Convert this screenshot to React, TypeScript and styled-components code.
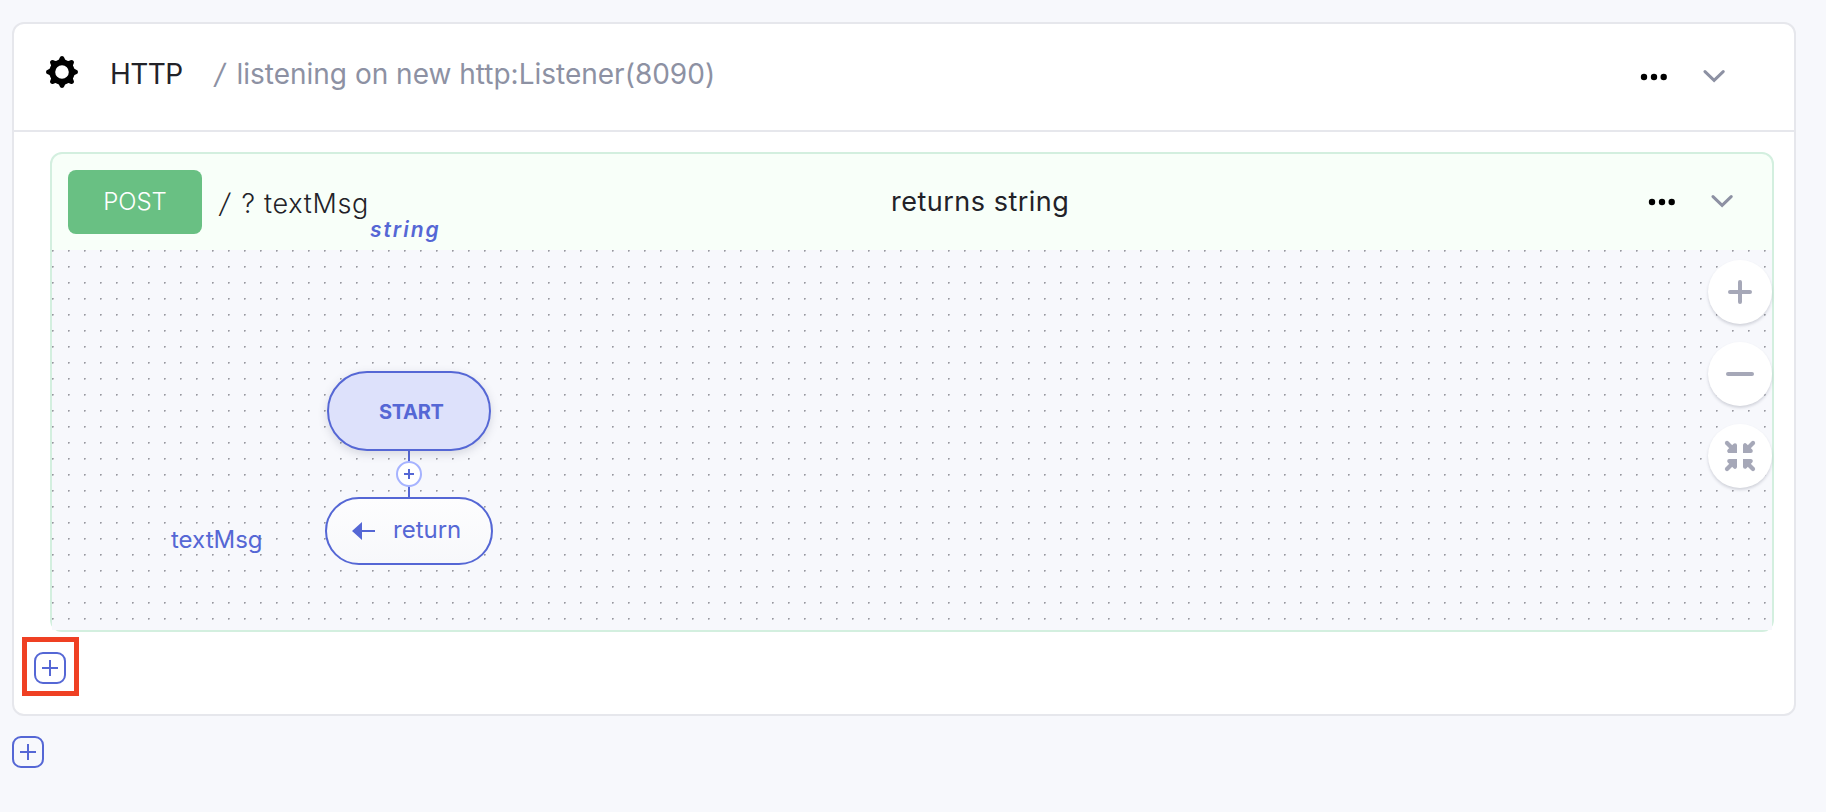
import React from "react";
import styled, { createGlobalStyle } from "styled-components";

const GlobalStyle = createGlobalStyle`
  * { box-sizing: border-box; }
  html, body { margin: 0; height: 100%; background: #f7f8fc; }
  body { font-family: Inter, "Open Sans", sans-serif; overflow: hidden; }
  svg { display: block; }
`;

const Page = styled.main`
  min-height: 812px;
  padding: 22px 30px 0 12px;
  display: flex;
  flex-direction: column;
  align-items: flex-start;
  gap: 20px;
`;

const ServiceCard = styled.section`
  width: 100%;
  height: 694px;
  background: #fff;
  border: 2px solid #e6e7ec;
  border-radius: 12px;
`;

const ServiceHeader = styled.header`
  height: 108px;
  padding: 0 68px 0 32px;
  border-bottom: 2px solid #e6e7ec;
  display: flex;
  align-items: flex-start;
`;

const GearSlot = styled.div`
  width: 32px;
  margin-top: 32px;
`;

const Label = styled.span<{
  $size: number;
  $line: number;
  $weight?: number;
  $color?: string;
  $spacing?: number;
  $top?: number;
  $left?: number;
}>`
  display: block;
  white-space: nowrap;
  font-size: ${(p) => p.$size}px;
  line-height: ${(p) => p.$line}px;
  font-weight: ${(p) => p.$weight ?? 400};
  color: ${(p) => p.$color ?? "#222228"};
  letter-spacing: ${(p) => p.$spacing ?? 0}px;
  margin-top: ${(p) => p.$top ?? 0}px;
  margin-left: ${(p) => p.$left ?? 0}px;
`;

const TypeLabel = styled(Label)`
  font-style: italic;
`;

const Slash = styled.span`
  display: inline-block;
  margin: 0 3px 0 2px;
  transform: skewX(-10deg);
`;

const Actions = styled.div<{ $top: number }>`
  margin-left: auto;
  margin-top: ${(p) => p.$top}px;
  display: flex;
  align-items: center;
  gap: 34px;
`;

const ResourceCard = styled.article`
  margin: 20px 20px 0 36px;
  height: 480px;
  border: 2px solid #d3efdf;
  border-radius: 12px;
  background: #f8fff9;
`;

const ResourceHeader = styled.header`
  height: 96px;
  padding: 0 38px 0 16px;
  display: grid;
  grid-template-columns: 823px 1fr auto;
`;

const Signature = styled.div`
  display: flex;
`;

const MethodBadge = styled.div`
  width: 134px;
  height: 64px;
  margin-top: 16px;
  border-radius: 8px;
  background: #69c083;
  display: flex;
  justify-content: center;
`;

const Canvas = styled.div`
  position: relative;
  height: 380px;
  background: #f7f8fc;
`;

const DotGrid = styled.svg`
  width: 100%;
  height: 100%;
`;

const Node = styled.div<{ $x: number; $y: number; $w: number; $h: number; $start?: boolean }>`
  position: absolute;
  left: ${(p) => p.$x}px;
  top: ${(p) => p.$y}px;
  width: ${(p) => p.$w}px;
  height: ${(p) => p.$h}px;
  display: flex;
  border: 2px solid #5567d5;
  border-radius: 40px;
  background: ${(p) => (p.$start ? "#dde1fb" : "linear-gradient(#fdfdfe, #f7f8fb)")};
  box-shadow: ${(p) => (p.$start ? "0 3px 10px rgba(80, 86, 110, 0.2)" : "none")};
`;

const Connector = styled.div`
  position: absolute;
  left: 356px;
  top: 201px;
  width: 2px;
  height: 46px;
  background: #5567d5;
`;

const InsertPoint = styled.div`
  position: absolute;
  left: 344px;
  top: 211px;
  width: 26px;
  height: 26px;
  border: 2px solid #a6b3ff;
  border-radius: 50%;
  background: #fff;
`;

const ParamTag = styled.div`
  position: absolute;
  left: 119px;
  top: 274px;
`;

const ArrowSlot = styled.div`
  margin: 23px 0 0 25px;
`;

const ZoomControls = styled.div`
  position: absolute;
  right: 0;
  top: 10px;
  display: flex;
  flex-direction: column;
  gap: 18px;
`;

const RoundButton = styled.button`
  width: 64px;
  height: 64px;
  padding: 0;
  border: 0;
  border-radius: 50%;
  background: #fff;
  box-shadow: 0 2px 3px rgba(60, 64, 90, 0.2);
`;

const CardFooter = styled.footer`
  padding: 20px 0 0 20px;
`;

const AddButton = styled.button`
  position: relative;
  display: block;
  width: 32px;
  height: 32px;
  padding: 0;
  border: 2px solid #5567d5;
  border-radius: 9px;
  background: transparent;
`;

const Highlight = styled.span`
  position: absolute;
  left: -13.7px;
  top: -17px;
  width: 57px;
  height: 59px;
  border: 5px solid #ef4023;
`;

const GearIcon = () => {
  const angles = [0, 45, 90, 135, 180, 225, 270, 315];
  return (
    <svg width="32" height="32" viewBox="-16 -16 32 32">
      <circle r="9.7" fill="none" stroke="#000" strokeWidth="5.8" />
      {angles.map((a) => (
        <path
          key={a}
          transform={`rotate(${a})`}
          d="M-4.4-11.4Q-2.8-12-2.3-14.2Q-1.8-16 0-16Q1.8-16 2.3-14.2Q2.8-12 4.4-11.4L4-10H-4Z"
        />
      ))}
    </svg>
  );
};

const MoreIcon = () => (
  <svg width="28" height="8" viewBox="0 0 28 8">
    <circle cx="4" cy="4" r="3.2" />
    <circle cx="14" cy="4" r="3.2" />
    <circle cx="23.7" cy="4" r="3.2" />
  </svg>
);

const ChevronIcon = () => (
  <svg width="24" height="14" viewBox="0 0 24 14" fill="none" stroke="#8d91a3" strokeWidth="3" strokeLinecap="round">
    <path d="M3 1.6L12.1 10.4L21.2 1.6" />
  </svg>
);

const AddIcon = () => (
  <svg width="28" height="28" viewBox="0 0 28 28" stroke="#5567d5" strokeWidth="2">
    <path d="M6 14H22M14 6V22" />
  </svg>
);

const ControlIcon = ({ d }: { d: string }) => (
  <svg width="64" height="64" viewBox="-32 -32 64 64" stroke="#a6a8b8" strokeWidth="4" strokeLinecap="round">
    <path d={d} />
  </svg>
);

const FitIcon = () => (
  <svg width="64" height="64" viewBox="-32 -32 64 64" fill="#a6a8b8" stroke="#a6a8b8" strokeLinecap="round" strokeLinejoin="round">
    {[0, 90, 180, 270].map((a) => (
      <g key={a} transform={`rotate(${a})`}>
        <path d="M-13-13L-6-6" strokeWidth="4.2" />
        <path d="M-5-5V-10.8L-10.8-5Z" strokeWidth="4" />
        <path d="M-3-3V-6H-6V-3Z" stroke="none" />
      </g>
    ))}
  </svg>
);

export default function App() {
  return (
    <>
      <GlobalStyle />
      <Page>
        <ServiceCard>
          <ServiceHeader>
            <GearSlot>
              <GearIcon />
            </GearSlot>
            <Label $size={28} $line={36} $top={32} $left={32} $spacing={-0.6}>HTTP</Label>
            <Label $size={28} $line={36} $top={32} $left={31} $color="#8d91a3">
              <Slash>/</Slash> listening on new http:Listener(8090)
            </Label>
            <Actions $top={46}>
              <MoreIcon />
              <ChevronIcon />
            </Actions>
          </ServiceHeader>

          <ResourceCard>
            <ResourceHeader>
              <Signature>
                <MethodBadge>
                  <Label $size={24} $line={32} $top={16} $weight={300} $color="#fff">POST</Label>
                </MethodBadge>
                <Label $size={27} $line={36} $top={32} $left={16} $weight={300} $spacing={0.7}>
                  <Slash>/</Slash> ? textMsg
                </Label>
                <TypeLabel $size={21} $line={28} $top={62} $left={1} $weight={600} $color="#5567d5" $spacing={1.9}>
                  string
                </TypeLabel>
              </Signature>
              <Label $size={27} $line={36} $top={30} $spacing={0.5}>returns string</Label>
              <Actions $top={0}>
                <MoreIcon />
                <ChevronIcon />
              </Actions>
            </ResourceHeader>

            <Canvas>
              <DotGrid>
                <defs>
                  <pattern id="dots" width="16" height="16" patternUnits="userSpaceOnUse">
                    <rect width="1" height="1" fill="#98989e" />
                    <rect x="1" width="1" height="1" fill="#b4b5bc" />
                    <rect y="1" width="1" height="1" fill="#b4b5bc" />
                    <rect x="1" y="1" width="1" height="1" fill="#d9dae0" />
                  </pattern>
                </defs>
                <rect width="100%" height="100%" fill="url(#dots)" />
              </DotGrid>
              <Connector />
              <Node $x={275} $y={121} $w={164} $h={80} $start>
                <Label $size={20} $line={28} $top={25} $left={50} $weight={700} $color="#5567d5" $spacing={-0.3}>START</Label>
              </Node>
              <InsertPoint>
                <svg width="22" height="22" viewBox="0 0 22 22" stroke="#5567d5" strokeWidth="2">
                  <path d="M6 11H16M11 6V16" />
                </svg>
              </InsertPoint>
              <Node $x={273} $y={247} $w={168} $h={68}>
                <ArrowSlot>
                  <svg width="24" height="18" viewBox="0 0 24 18">
                    <path d="M0 9L10 0V8H23V10H10V18Z" fill="#5567d5" />
                  </svg>
                </ArrowSlot>
                <Label $size={24} $line={32} $top={15} $left={17} $color="#5567d5">return</Label>
              </Node>
              <ParamTag>
                <Label $size={24} $line={32} $color="#5567d5">textMsg</Label>
              </ParamTag>
              <ZoomControls>
                <RoundButton aria-label="Zoom in">
                  <ControlIcon d="M-10 0H10M0-10V10" />
                </RoundButton>
                <RoundButton aria-label="Zoom out">
                  <ControlIcon d="M-12 0H12" />
                </RoundButton>
                <RoundButton aria-label="Fit to view">
                  <FitIcon />
                </RoundButton>
              </ZoomControls>
            </Canvas>
          </ResourceCard>

          <CardFooter>
            <AddButton aria-label="Add resource">
              <AddIcon />
              <Highlight />
            </AddButton>
          </CardFooter>
        </ServiceCard>
        <AddButton aria-label="Add service">
          <AddIcon />
        </AddButton>
      </Page>
    </>
  );
}
